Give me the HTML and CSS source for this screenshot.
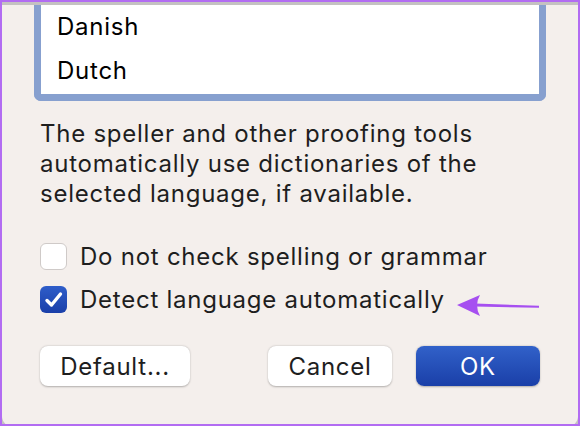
FILE: index.html
```html
<!DOCTYPE html>
<html>
<head>
    <title>Language</title>
    <link rel="stylesheet" href="styles.css">
</head>
<body>
    <div class="frame">
        <div class="dialog">
            <div class="list">
                <div class="item">Danish</div>
                <div class="item">Dutch</div>
            </div>

            <p class="note">The speller and other proofing tools automatically use dictionaries of the selected language, if available.</p>

            <label class="check">
                <span class="box"></span>
                <span>Do not check spelling or grammar</span>
            </label>
            <label class="check">
                <span class="box on">
                    <svg width="27" height="27" viewBox="0 0 27 27"><path d="M7 14.5 L11.5 19 L20.5 8" fill="none" stroke="#fff" stroke-width="3.4" stroke-linecap="round" stroke-linejoin="round"/></svg>
                </span>
                <span>Detect language automatically</span>
            </label>

            <div class="buttons">
                <button class="btn">Default...</button>
                <span class="spacer"></span>
                <button class="btn">Cancel</button>
                <button class="btn primary">OK</button>
            </div>
        </div>

        <svg class="arrow" width="90" height="32" viewBox="0 0 90 32">
            <path d="M20 13.4 L84 15.8 L84 17.8 L20 16.6 Z" fill="#a64ff0"/>
            <path d="M2 15 L25 5 Q19 15 25 26 Z" fill="#a64ff0"/>
        </svg>
    </div>
</body>
</html>
```

FILE: styles.css
```css
body { margin: 0; font-family: Inter, "Noto Sans", sans-serif; }
.frame { position: relative; width: 580px; height: 426px; box-sizing: border-box; border: 2px solid #b26cf2; background: #c4c2c1; overflow: hidden; }
.dialog { height: 100%; box-sizing: border-box; background: #f4efec; border-radius: 0 0 11px 11px; padding: 0 38px; color: #1e1e1e; letter-spacing: 0.75px; }
.list { margin: 0 -6px; height: 96px; box-sizing: border-box; border: 7px solid #87a0cf; border-top: none; border-radius: 0 0 7px 7px; background: #fff; padding-left: 16px; }
.item { height: 44px; line-height: 44px; font-size: 24px; color: #000; }
.item:first-child { margin-top: 3px; }
.note { margin: 18px 0 0; font-size: 24px; line-height: 30px; }
.check { display: flex; align-items: center; gap: 13px; height: 43px; font-size: 24px; }
.check:first-of-type { margin-top: 26px; }
.box { width: 27px; height: 27px; box-sizing: border-box; border-radius: 6px; background: #fff; border: 1px solid #cfcac8; }
.box.on { border: none; background: linear-gradient(#2e5dc9, #1a3fa9); }
.box svg { display: block; }
.buttons { display: flex; gap: 24px; margin-top: 25px; }
.spacer { flex: 1; }
.btn { height: 40px; padding: 0; border: none; border-radius: 8px; background: #fff; box-shadow: 0 0.5px 2px rgba(0,0,0,0.28); font-family: Inter, sans-serif; font-size: 24px; letter-spacing: 0.75px; color: #1e1e1e; }
.btn:first-child { width: 150px; }
.btn:nth-child(3) { width: 124px; }
.btn.primary { width: 124px; background: linear-gradient(#3161c9, #1a3fa8); color: #fff; }
.arrow { position: absolute; left: 453px; top: 288px; }
```
